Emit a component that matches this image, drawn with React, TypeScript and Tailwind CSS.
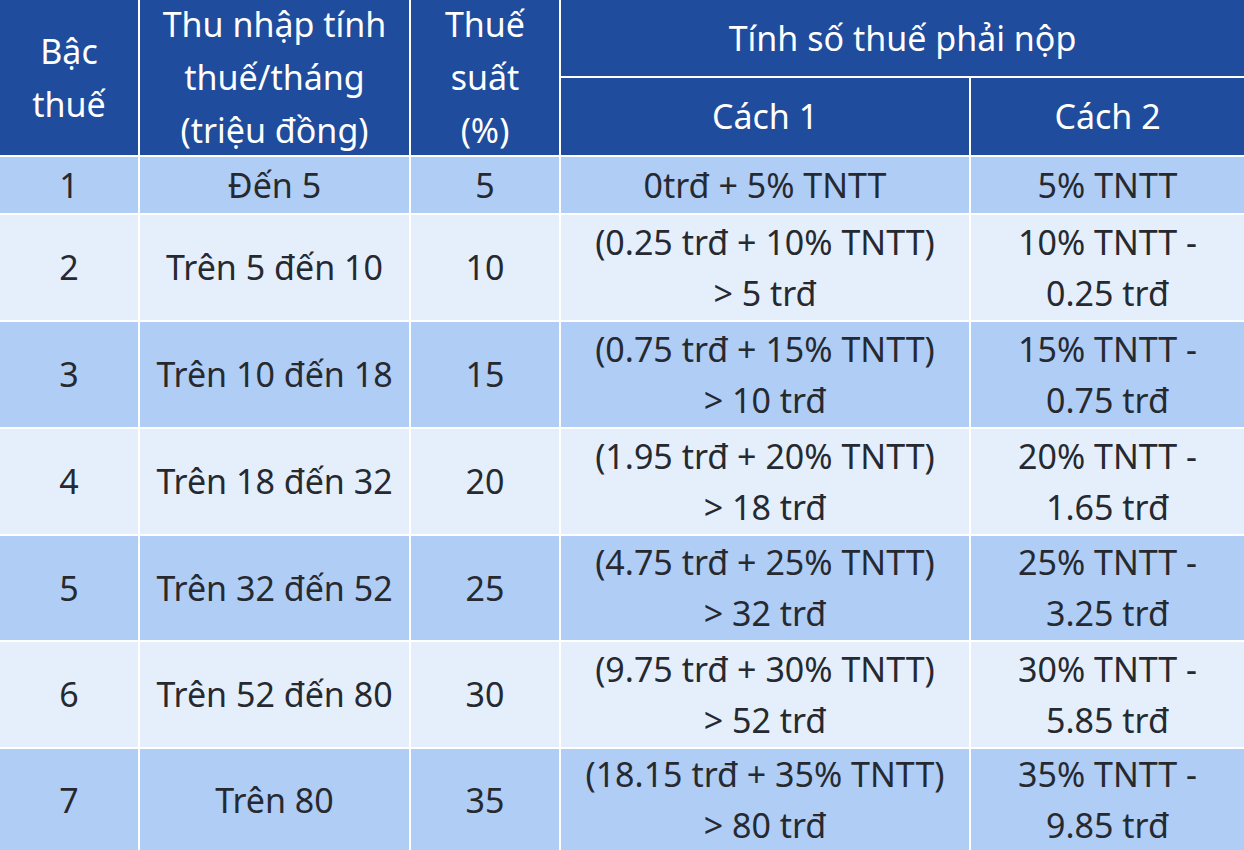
const rows = [
  ['1', 'Đến 5', '5', ['0trđ + 5% TNTT'], ['5% TNTT']],
  ['2', 'Trên 5 đến 10', '10', ['(0.25 trđ + 10% TNTT)', '> 5 trđ'], ['10% TNTT -', '0.25 trđ']],
  ['3', 'Trên 10 đến 18', '15', ['(0.75 trđ + 15% TNTT)', '> 10 trđ'], ['15% TNTT -', '0.75 trđ']],
  ['4', 'Trên 18 đến 32', '20', ['(1.95 trđ + 20% TNTT)', '> 18 trđ'], ['20% TNTT -', '1.65 trđ']],
  ['5', 'Trên 32 đến 52', '25', ['(4.75 trđ + 25% TNTT)', '> 32 trđ'], ['25% TNTT -', '3.25 trđ']],
  ['6', 'Trên 52 đến 80', '30', ['(9.75 trđ + 30% TNTT)', '> 52 trđ'], ['30% TNTT -', '5.85 trđ']],
  ['7', 'Trên 80', '35', ['(18.15 trđ + 35% TNTT)', '> 80 trđ'], ['35% TNTT -', '9.85 trđ']],
] as const;

const heights = ['h-[58px]', 'h-[107px]', 'h-[107px]', 'h-[107px]', 'h-[106px]', 'h-[107px]', 'h-[103px]'];

export default function App() {
  return (
    <div className="h-[850px] w-[1244px] overflow-hidden bg-white font-['Noto_Sans','Open_Sans',sans-serif] text-[34px] leading-[51px] text-[#262a30]">
      <table className="w-[1244px] table-fixed border-collapse text-center">
        <colgroup>
          <col className="w-[139px]" />
          <col className="w-[271px]" />
          <col className="w-[150px]" />
          <col className="w-[410px]" />
          <col className="w-[274px]" />
        </colgroup>
        <thead className="bg-[#1f4c9c] text-white">
          <tr className="h-[77px]">
            <th rowSpan={2} className="border-2 border-t-0 border-l-0 border-white p-0 font-normal">
              <div className="-my-[4px] leading-[53px]">
                Bậc
                <br />
                thuế
              </div>
            </th>
            <th rowSpan={2} className="border-2 border-t-0 border-white p-0 font-normal">
              <div className="-my-[4px] leading-[53px]">
                Thu nhập tính
                <br />
                thuế/tháng
                <br />
                (triệu đồng)
              </div>
            </th>
            <th rowSpan={2} className="border-2 border-t-0 border-white p-0 font-normal">
              <div className="-my-[4px] leading-[53px]">
                Thuế
                <br />
                suất
                <br />
                (%)
              </div>
            </th>
            <th colSpan={2} className="border-2 border-t-0 border-r-0 border-white font-normal">
              Tính số thuế phải nộp
            </th>
          </tr>
          <tr className="h-[79px]">
            <th className="border-2 border-white font-normal">Cách 1</th>
            <th className="border-2 border-r-0 border-white font-normal">Cách 2</th>
          </tr>
        </thead>
        <tbody>
          {rows.map((r, i) => (
            <tr key={r[0]} className={`${heights[i]} ${i % 2 === 0 ? 'bg-[#b0cdf6]' : 'bg-[#e5effc]'}`}>
              <td className="border-2 border-l-0 border-white">{r[0]}</td>
              <td className="border-2 border-white">{r[1]}</td>
              <td className="border-2 border-white">{r[2]}</td>
              <td className="border-2 border-white">
                {r[3].map((t) => (
                  <div key={t}>{t}</div>
                ))}
              </td>
              <td className="border-2 border-r-0 border-white">
                {r[4].map((t) => (
                  <div key={t}>{t}</div>
                ))}
              </td>
            </tr>
          ))}
        </tbody>
      </table>
    </div>
  );
}
